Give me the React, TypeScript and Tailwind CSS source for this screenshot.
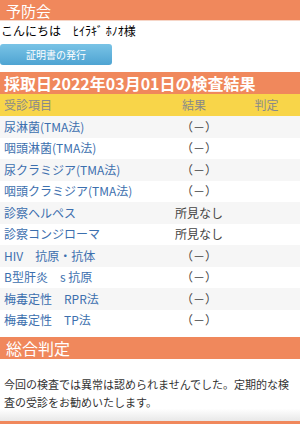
import React from "react"

const rows: [string, string][] = [
  ["尿淋菌(TMA法)", "（－）"],
  ["咽頭淋菌(TMA法)", "（－）"],
  ["尿クラミジア(TMA法)", "（－）"],
  ["咽頭クラミジア(TMA法)", "（－）"],
  ["診察ヘルペス", "所見なし"],
  ["診察コンジローマ", "所見なし"],
  ["HIV　抗原・抗体", "（－）"],
  ["B型肝炎　s 抗原", "（－）"],
  ["梅毒定性　RPR法", "（－）"],
  ["梅毒定性　TP法", "（－）"],
]

export default function App() {
  return (
    <div
      className="w-[300px] h-[424px] overflow-hidden bg-white flex flex-col"
      style={{ fontFamily: '"Noto Sans CJK JP", "Noto Sans", sans-serif' }}
    >
      <div className="h-[21px] shrink-0 flex items-center bg-[#f0885c] text-white text-[15px] leading-none pl-[6px] border-b border-[#f6d6c8]">
        予防会
      </div>

      <div className="h-[23px] shrink-0 flex items-center text-[12px] leading-none text-black pl-[1px] pb-[4px]">
        こんにちは　ﾋｲﾗｷﾞ ﾎﾉｵ様
      </div>

      <button className="shrink-0 w-[112px] h-[21px] rounded-[3px] bg-gradient-to-b from-[#79c3e6] to-[#4ea4d2] text-white text-[10px] leading-none">
        証明書の発行
      </button>

      <div className="mt-[7px] h-[22px] shrink-0 flex items-center bg-[#f0885c] text-white text-[16px] font-bold leading-none pl-[4px]">
        採取日2022年03月01日の検査結果
      </div>

      <table className="w-full border-collapse text-[12px] leading-none">
        <thead>
          <tr className="h-[22px] bg-[#f8d549] text-[#8a8a8a]">
            <th className="font-normal text-left pl-[4px] w-[155px]">受診項目</th>
            <th className="font-normal text-center w-[78px]">結果</th>
            <th className="font-normal text-center">判定</th>
          </tr>
        </thead>
        <tbody>
          {rows.map(([name, result], i) => (
            <tr key={name} className={i % 2 === 0 ? "h-[21.5px] bg-[#f6f6f6]" : "h-[21.5px] bg-white"}>
              <td className="pl-[4px] text-[#3c6fae] whitespace-nowrap">{name}</td>
              <td className="text-center text-[#444] pl-[10px]">{result}</td>
              <td></td>
            </tr>
          ))}
        </tbody>
      </table>

      <div className="mt-[6px] h-[22px] shrink-0 flex items-center bg-[#f0885c] text-white text-[16px] leading-none pl-[6px]">
        総合判定
      </div>

      <div className="flex-1 bg-gradient-to-b from-white from-80% to-[#e8e8e8] px-[4px] pt-[16px] text-[11px] leading-[18px] text-[#333]">
        今回の検査では異常は認められませんでした。定期的な検査の受診をお勧めいたします。
      </div>

      <div className="h-[3px] shrink-0 bg-[#f0885c]"></div>
    </div>
  )
}
